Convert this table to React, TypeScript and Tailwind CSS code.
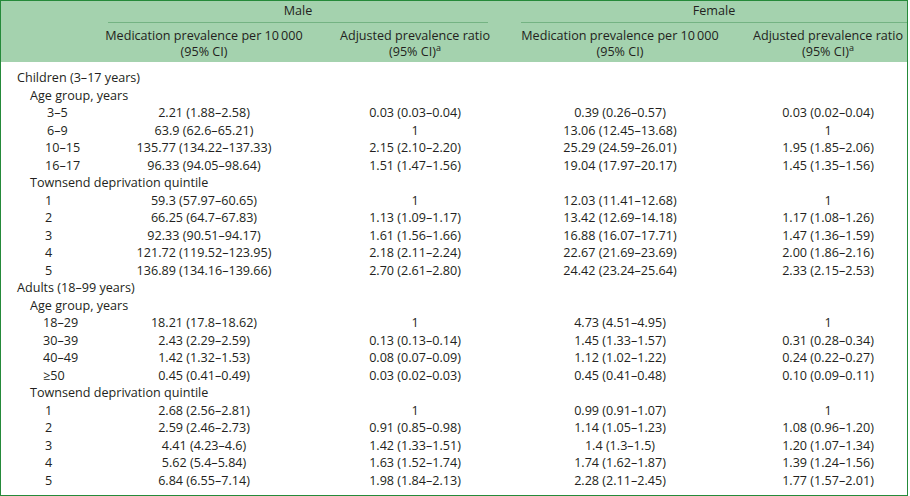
type Row =
  | { kind: 'group'; label: string }
  | { kind: 'sub'; label: string }
  | { kind: 'data'; label: string; indent: string; cells: [string, string, string, string] }

const age = 'pl-[42px]'
const ageKid = 'pl-[46px]'
const ageKidWide = 'pl-[44px]'
const quint = 'pl-[44px]'

const ROWS: Row[] = [
  { kind: 'group', label: 'Children (3–17 years)' },
  { kind: 'sub', label: 'Age group, years' },
  { kind: 'data', label: '3–5', indent: ageKid, cells: ['2.21 (1.88–2.58)', '0.03 (0.03–0.04)', '0.39 (0.26–0.57)', '0.03 (0.02–0.04)'] },
  { kind: 'data', label: '6–9', indent: ageKid, cells: ['63.9 (62.6–65.21)', '1', '13.06 (12.45–13.68)', '1'] },
  { kind: 'data', label: '10–15', indent: ageKidWide, cells: ['135.77 (134.22–137.33)', '2.15 (2.10–2.20)', '25.29 (24.59–26.01)', '1.95 (1.85–2.06)'] },
  { kind: 'data', label: '16–17', indent: ageKidWide, cells: ['96.33 (94.05–98.64)', '1.51 (1.47–1.56)', '19.04 (17.97–20.17)', '1.45 (1.35–1.56)'] },
  { kind: 'sub', label: 'Townsend deprivation quintile' },
  { kind: 'data', label: '1', indent: quint, cells: ['59.3 (57.97–60.65)', '1', '12.03 (11.41–12.68)', '1'] },
  { kind: 'data', label: '2', indent: quint, cells: ['66.25 (64.7–67.83)', '1.13 (1.09–1.17)', '13.42 (12.69–14.18)', '1.17 (1.08–1.26)'] },
  { kind: 'data', label: '3', indent: quint, cells: ['92.33 (90.51–94.17)', '1.61 (1.56–1.66)', '16.88 (16.07–17.71)', '1.47 (1.36–1.59)'] },
  { kind: 'data', label: '4', indent: quint, cells: ['121.72 (119.52–123.95)', '2.18 (2.11–2.24)', '22.67 (21.69–23.69)', '2.00 (1.86–2.16)'] },
  { kind: 'data', label: '5', indent: quint, cells: ['136.89 (134.16–139.66)', '2.70 (2.61–2.80)', '24.42 (23.24–25.64)', '2.33 (2.15–2.53)'] },
  { kind: 'group', label: 'Adults (18–99 years)' },
  { kind: 'sub', label: 'Age group, years' },
  { kind: 'data', label: '18–29', indent: age, cells: ['18.21 (17.8–18.62)', '1', '4.73 (4.51–4.95)', '1'] },
  { kind: 'data', label: '30–39', indent: age, cells: ['2.43 (2.29–2.59)', '0.13 (0.13–0.14)', '1.45 (1.33–1.57)', '0.31 (0.28–0.34)'] },
  { kind: 'data', label: '40–49', indent: age, cells: ['1.42 (1.32–1.53)', '0.08 (0.07–0.09)', '1.12 (1.02–1.22)', '0.24 (0.22–0.27)'] },
  { kind: 'data', label: '≥50', indent: age, cells: ['0.45 (0.41–0.49)', '0.03 (0.02–0.03)', '0.45 (0.41–0.48)', '0.10 (0.09–0.11)'] },
  { kind: 'sub', label: 'Townsend deprivation quintile' },
  { kind: 'data', label: '1', indent: quint, cells: ['2.68 (2.56–2.81)', '1', '0.99 (0.91–1.07)', '1'] },
  { kind: 'data', label: '2', indent: quint, cells: ['2.59 (2.46–2.73)', '0.91 (0.85–0.98)', '1.14 (1.05–1.23)', '1.08 (0.96–1.20)'] },
  { kind: 'data', label: '3', indent: quint, cells: ['4.41 (4.23–4.6)', '1.42 (1.33–1.51)', '1.4 (1.3–1.5)', '1.20 (1.07–1.34)'] },
  { kind: 'data', label: '4', indent: quint, cells: ['5.62 (5.4–5.84)', '1.63 (1.52–1.74)', '1.74 (1.62–1.87)', '1.39 (1.24–1.56)'] },
  { kind: 'data', label: '5', indent: quint, cells: ['6.84 (6.55–7.14)', '1.98 (1.84–2.13)', '2.28 (2.11–2.45)', '1.77 (1.57–2.01)'] },
]

// column cells: label | maleMed | gap | maleAdj | gap | femaleMed | gap | femaleAdj
function Cells({ cells }: { cells: [string, string, string, string] }) {
  return (
    <>
      <div className="w-[192px] shrink-0 text-center">{cells[0]}</div>
      <div className="w-[40px] shrink-0" />
      <div className="w-[150px] shrink-0 text-center">{cells[1]}</div>
      <div className="w-[31px] shrink-0" />
      <div className="w-[198px] shrink-0 text-center">{cells[2]}</div>
      <div className="w-[33px] shrink-0" />
      <div className="w-[152px] shrink-0 text-center">{cells[3]}</div>
    </>
  )
}

function ColHead() {
  return (
    <div className="whitespace-nowrap leading-[16px]">
      <div>Medication prevalence per 10{'\u2009'}000</div>
      <div>(95% CI)</div>
    </div>
  )
}

function AdjHead() {
  return (
    <div className="whitespace-nowrap leading-[16px]">
      <div>Adjusted prevalence ratio</div>
      <div>
        (95% CI)<sup className="-top-[5px] text-[9px] leading-none">a</sup>
      </div>
    </div>
  )
}

export default function App() {
  return (
    <div className="h-[496px] w-[908px] border border-[#258a3a] bg-white font-['Open_Sans',sans-serif] text-[12.6px] text-[#231f20]">
      {/* header */}
      <div className="h-[61px] bg-[#a4d2ae]">
        <div className="flex h-[22px]">
          <div className="w-[107px] shrink-0" />
          <div className="w-[380px] shrink-0 border-b border-[#74b383] pt-[2px] text-center leading-[16px]">
            Male
          </div>
          <div className="w-[33px] shrink-0" />
          <div className="flex-1 border-b border-[#74b383] pt-[2px] text-center leading-[16px]">
            Female
          </div>
        </div>
        <div className="flex pt-[5px]">
          <div className="w-[107px] shrink-0" />
          <div className="flex w-[192px] shrink-0 justify-center text-center">
            <ColHead />
          </div>
          <div className="w-[40px] shrink-0" />
          <div className="flex w-[150px] shrink-0 justify-center text-center">
            <AdjHead />
          </div>
          <div className="w-[31px] shrink-0" />
          <div className="flex w-[198px] shrink-0 justify-center text-center">
            <ColHead />
          </div>
          <div className="w-[33px] shrink-0" />
          <div className="flex w-[152px] shrink-0 justify-center text-center">
            <AdjHead />
          </div>
        </div>
      </div>

      {/* body */}
      <div className="pt-[7px]">
        {ROWS.map((row, i) => {
          if (row.kind === 'group')
            return (
              <div key={i} className="h-[17.5px] whitespace-nowrap pl-[16px] leading-[17.5px]">
                {row.label}
              </div>
            )
          if (row.kind === 'sub')
            return (
              <div key={i} className="h-[17.5px] whitespace-nowrap pl-[29px] leading-[17.5px]">
                {row.label}
              </div>
            )
          return (
            <div key={i} className="flex h-[17.5px] whitespace-nowrap leading-[17.5px]">
              <div className={`w-[107px] shrink-0 ${row.indent}`}>{row.label}</div>
              <Cells cells={row.cells} />
            </div>
          )
        })}
      </div>
    </div>
  )
}
